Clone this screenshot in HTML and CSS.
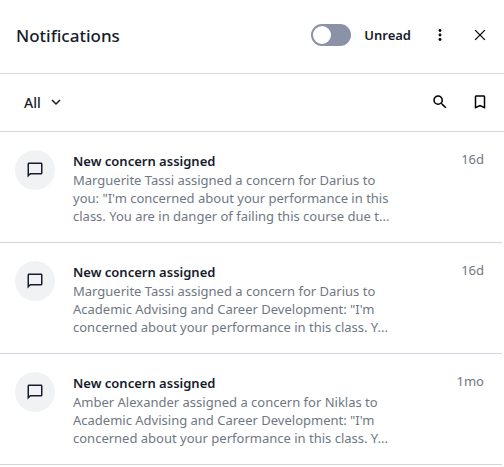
FILE: index.html
```html
<!DOCTYPE html>
<html lang="en">
<head>
<meta charset="utf-8">
<meta name="viewport" content="width=device-width, initial-scale=1">
<title>Notifications</title>
<link rel="stylesheet" href="styles.css">
</head>
<body>
<svg class="sprite" aria-hidden="true">
  <symbol id="chat" viewBox="0 0 24 24"><path d="M20 2H4c-1.100 0-2 .9-2 2v18l4-4h14c1.100 0 2-.9 2-2V4c0-1.100-.9-2-2-2zm0 14H5.200L4 17.200V4h16v12z"/></symbol>
</svg>
<main class="panel">
  <header class="bar header">
    <h1 class="heading">Notifications</h1>
    <label class="unread"><input class="switch" type="checkbox" role="switch">Unread</label>
    <button class="icon-button" type="button" aria-label="More options">
      <svg class="icon" viewBox="0 0 24 24"><circle cx="12" cy="6" r="1.900"/><circle cx="12" cy="12" r="1.900"/><circle cx="12" cy="18" r="1.900"/></svg>
    </button>
    <button class="icon-button" type="button" aria-label="Close">
      <svg class="icon" viewBox="0 0 24 24"><path d="M5.500 5.500l13 13M18.500 5.500l-13 13" fill="none" stroke="currentColor" stroke-width="1.700"/></svg>
    </button>
  </header>
  <div class="bar toolbar">
    <button class="filter" type="button">All
      <svg class="chevron" viewBox="0 0 10 10"><path d="M1 3l4 4 4-4"/></svg>
    </button>
    <button class="icon-button" type="button" aria-label="Search">
      <svg class="icon" viewBox="0 0 24 24"><path d="M15.500 14h-.79l-.28-.27A6.470 6.470 0 0 0 16 9.500 6.500 6.500 0 1 0 9.500 16c1.610 0 3.090-.59 4.230-1.570l.27.28v.79l5 4.990L20.490 19l-4.990-5zm-6 0C7.010 14 5 11.990 5 9.500S7.010 5 9.500 5 14 7.010 14 9.500 11.990 14 9.500 14z"/></svg>
    </button>
    <button class="icon-button" type="button" aria-label="Bookmarks">
      <svg class="icon" viewBox="0 0 24 24"><path d="M17 3H7c-1.100 0-2 .9-2 2v16l7-3 7 3V5c0-1.100-.9-2-2-2zm0 15-5-2.180L7 18V5h10v13z"/></svg>
    </button>
  </div>
  <ul class="list">
    <li class="item">
      <span class="avatar"><svg class="icon" aria-hidden="true"><use href="#chat"/></svg></span>
      <div class="content">
        <h2 class="title">New concern assigned</h2>
        <p class="message">Marguerite Tassi assigned a concern for Darius to you: "I'm concerned about your performance in this class. You are in danger of failing this course due t...</p>
      </div>
      <time class="age">16d</time>
    </li>
    <li class="item">
      <span class="avatar"><svg class="icon" aria-hidden="true"><use href="#chat"/></svg></span>
      <div class="content">
        <h2 class="title">New concern assigned</h2>
        <p class="message">Marguerite Tassi assigned a concern for Darius to Academic Advising and Career Development: "I'm concerned about your performance in this class. Y...</p>
      </div>
      <time class="age">16d</time>
    </li>
    <li class="item">
      <span class="avatar"><svg class="icon" aria-hidden="true"><use href="#chat"/></svg></span>
      <div class="content">
        <h2 class="title">New concern assigned</h2>
        <p class="message">Amber Alexander assigned a concern for Niklas to Academic Advising and Career Development: "I'm concerned about your performance in this class. Y...</p>
      </div>
      <time class="age">1mo</time>
    </li>
  </ul>
</main>
</body>
</html>
```
FILE: styles.css
```css
* {
  box-sizing: border-box;
}

body {
  margin: 0;
  background: #fff;
  color: #161c2b;
  font-family: "Noto Sans", "Open Sans", sans-serif;
  font-size: 13px;
}

h1, h2, p, ul {
  margin: 0;
  padding: 0;
}

button {
  padding: 0;
  border: 0;
  background: none;
  color: inherit;
  font: inherit;
}

.sprite {
  display: none;
}

.bar {
  display: flex;
  align-items: center;
  padding: 0 4px 0 16px;
  border-bottom: 1px solid #d3d6dc;
}

.header {
  padding-top: 15px;
  padding-bottom: 18px;
}

.toolbar {
  padding-top: 8px;
  padding-bottom: 9px;
}

.heading {
  margin-right: auto;
  font-size: 17px;
  font-weight: 500;
}

.unread {
  display: flex;
  align-items: center;
  gap: 13px;
  margin-right: 9px;
  font-weight: 600;
}

.switch {
  appearance: none;
  width: 40px;
  height: 22px;
  margin: 0;
  padding: 2px;
  border-radius: 11px;
  background: #8b91a7;
}

.switch::before {
  content: "";
  display: block;
  width: 18px;
  height: 18px;
  border-radius: 50%;
  background: #fff;
}

.switch:checked::before {
  margin-left: auto;
}

.icon-button {
  display: grid;
  place-items: center;
  width: 40px;
  height: 40px;
}

.icon {
  width: 18px;
  height: 18px;
  fill: currentColor;
}

.icon-button .icon {
  color: #000;
}

.filter {
  display: flex;
  align-items: center;
  gap: 10px;
  margin-right: auto;
  padding: 0 8px;
  font-size: 14px;
  font-weight: 500;
}

.chevron {
  width: 10px;
  height: 10px;
  fill: none;
  stroke: currentColor;
  stroke-width: 1.5;
}

.list {
  margin-right: 2px;
  list-style: none;
}

.item {
  display: flex;
  align-items: flex-start;
  padding: 18px 18px 17px 15px;
  border-bottom: 1px solid #d0d4de;
}

.avatar {
  display: grid;
  flex: none;
  place-items: center;
  width: 40px;
  height: 40px;
  margin-right: 18px;
  border-radius: 50%;
  background: #f1f2f4;
}

.content {
  flex: 1;
  padding-top: 1px;
}

.title {
  font-size: 13px;
  font-weight: 600;
  line-height: 20px;
}

.message {
  color: #6f7783;
  line-height: 18px;
}

.age {
  flex: none;
  width: 84px;
  color: #6f7783;
  line-height: 18px;
  text-align: right;
}
```
